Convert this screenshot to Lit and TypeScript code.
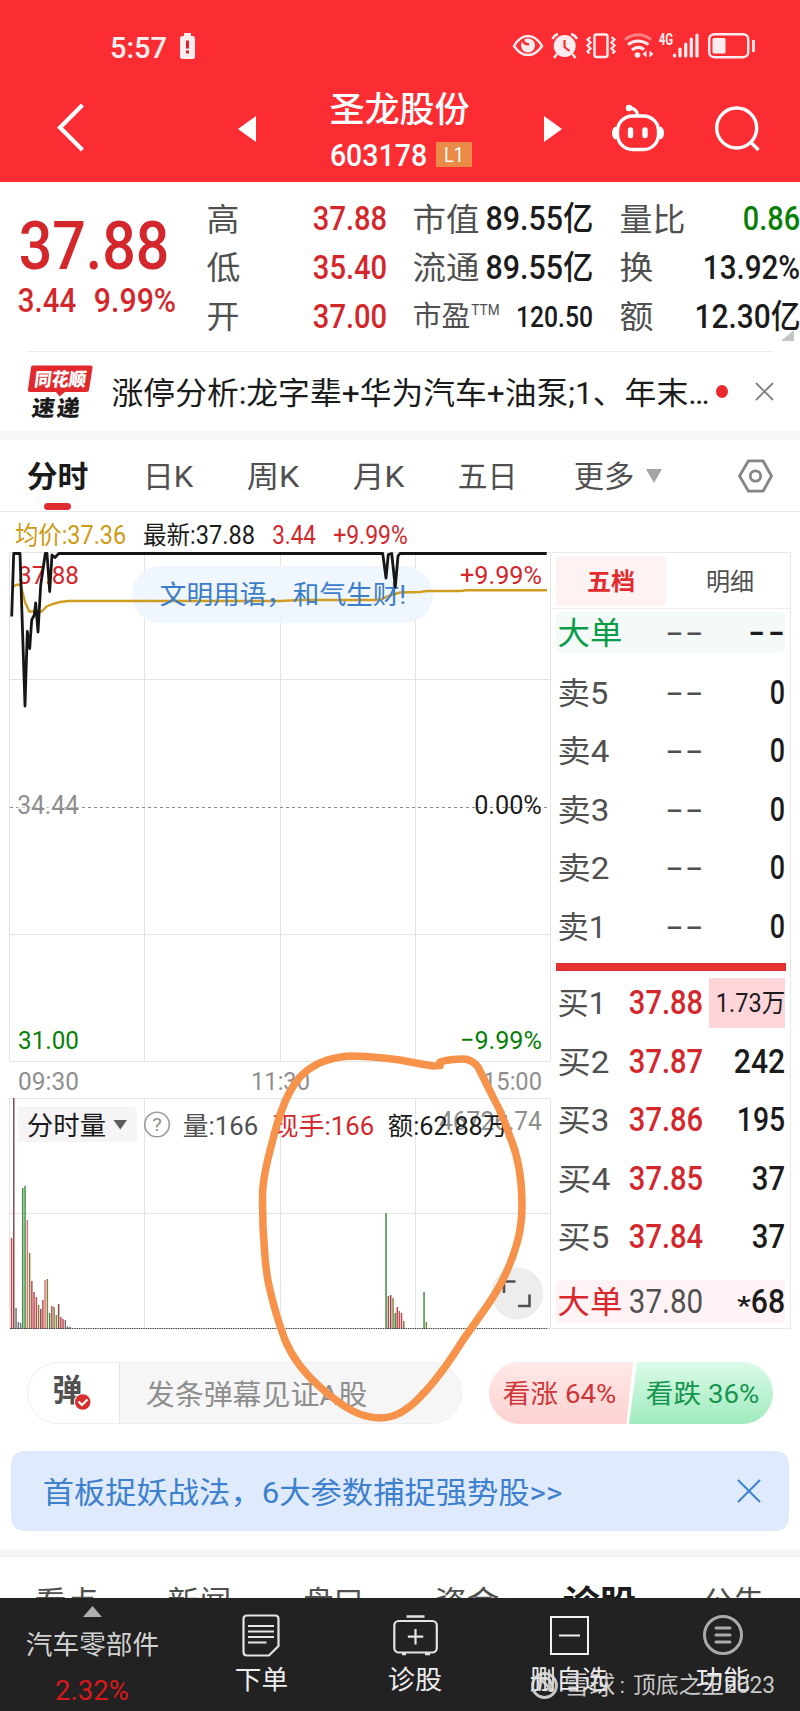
import { LitElement, html, svg, css } from "lit";
import { customElement } from "lit/decorators.js";

/* Side bearing, in em, that a line carries on each end. */
const bearing = (text: string) => (/^[\d+−*.:%-]+$/.test(text) ? 0.035 : 0.045);

/* One line of text whose ink spans exactly `w` pixels; the box is `size` high. */
const fit = (text: string, w: number, size: number, cls = "") => html`
  <svg class="fit ${cls}" width=${w} height=${size}>
    <text x=${-bearing(text) * size} y=${0.86 * size} font-size=${size}
      textLength=${w + 2 * bearing(text) * size} lengthAdjust="spacingAndGlyphs">${text}</text>
  </svg>`;

/* The same inside a drawing: x is the left ink edge, cy the vertical centre. */
const label = (text: string, x: number, cy: number, w: number, size: number, cls = "") => svg`
  <text class=${cls} x=${x - bearing(text) * size} y=${cy + 0.36 * size} font-size=${size}
    textLength=${w + 2 * bearing(text) * size} lengthAdjust="spacingAndGlyphs">${text}</text>`;

const shared = css`
  :host { display: block; font-family: Roboto, "Noto Sans CJK SC", sans-serif; }
  svg { display: block; flex: none; overflow: visible; }
  text { white-space: pre; }
  .fit { fill: currentColor; }
  .m { font-weight: 500; }
  .b { font-weight: 700; }
  .red { color: #d3272c; fill: #d3272c; }
  .green { color: #088008; fill: #088008; }
  .grey { color: #8e8e8e; fill: #8e8e8e; }
  .dim { color: #505050; fill: #505050; }
  .ink { color: #1b1b1b; fill: #1b1b1b; }
`;

@customElement("top-bar")
class TopBar extends LitElement {
  static styles = [shared, css`
    :host { height: 182px; background: #fb2d33; color: #fff; }
    .status { display: flex; height: 92px; padding: 2px 45px 0 111px; box-sizing: border-box; align-items: center; color: #ffecee; }
    .low { margin: 0 0 3px 14px; }
    .sys { margin: 0 0 3px auto; }
    .bar { display: flex; align-items: flex-start; height: 90px; }
    .back { margin: 12px 0 0 57px; }
    .prev { margin: 24px 0 0 154px; }
    .name { margin: 0 0 0 75px; width: 141px; display: flex; flex-direction: column; gap: 12px; }
    .code { display: flex; gap: 10px; align-items: center; }
    .lv { background: #ea8b48; width: 36px; height: 25px; display: flex; align-items: center; justify-content: center; border-radius: 1px; }
    .next { margin: 24px 0 0 72px; }
    .bot { margin: 12px 0 0 50px; }
    .find { margin: 14px 0 0 51px; }
  `];
  render() {
    return html`
      <div class="status">
        ${fit("5:57", 55, 30, "m")}
        <svg class="low" width="15" height="26" viewBox="0 0 15 26">
          <path d="M4 0h7v3h-7z" fill="#ffecee"/><rect y="3" width="15" height="23" rx="2.5" fill="#ffecee"/>
          <path d="M6 7.500h3v8h-3zM6 17.500h3v3h-3z" fill="#e0202a"/>
        </svg>
        <svg class="sys" width="242" height="27" viewBox="513 32 242 27" fill="none" stroke="#ffecee" stroke-width="2.400">
          <path d="M514 46Q520 36 528 36Q536 36 542 46Q536 55 528 55Q520 55 514 46Z"/>
          <circle cx="528" cy="45.500" r="7" fill="#ffecee" stroke="none"/>
          <path d="M523 40q1 5 6 4" stroke="#fb2d33" stroke-width="2.600"/>
          <circle cx="564.700" cy="46" r="11" fill="#ffecee" stroke="none"/>
          <path d="M552.500 39q2-4 5.500-5M571 34q4 1 6 5M557 54l-3 4M572.500 54l3 4"/>
          <path d="M564.500 40v7l5 4" stroke="#fb2d33" stroke-width="2.200"/>
          <rect x="594.500" y="34.500" width="13" height="22.500" rx="2"/>
          <path d="M590.500 37l-3 2.500 3 3-3 3 3 3-3 3 2 2M611.500 37l3 2.500-3 3 3 3-3 3 3 3-2 2" stroke-width="2.200"/>
          <path d="M625 39.500Q638 30 651 39.500" stroke="#fd8087" stroke-width="3"/>
          <path d="M628 44.500Q638 37.500 648.500 44.500" stroke-width="3"/>
          <path d="M632 50Q638 45 644 49.500" stroke-width="3"/>
          <circle cx="637.500" cy="55" r="2.800" fill="#ffecee" stroke="none"/>
          <path d="M646.500 50.500v7l-4-3.500zM649.500 50.500v7l4-3.500z" fill="#ffecee" stroke="none"/>
          <g fill="#ffecee" stroke="none" class="b">${label("4G", 659.5, 39.5, 13, 16)}</g>
          <path d="M674.500 56v-1M680 56v-7M685.700 56v-12M691.300 56v-17M697 56v-21" stroke-width="3.200" stroke-linecap="round"/>
          <rect x="709.200" y="34.200" width="39" height="23" rx="5"/>
          <rect x="712.500" y="38" width="13" height="15.500" rx="1.500" fill="#ffecee" stroke="none"/>
          <path d="M753.500 40v12" stroke-width="2.800"/>
        </svg>
      </div>
      <div class="bar">
        <svg class="back" width="27" height="47" viewBox="0 0 27 47"><path d="M25.500 1L3 23.500 25.500 46" fill="none" stroke="#fff" stroke-width="4.200"/></svg>
        <svg class="prev" width="18" height="26"><path d="M18 0v26L0 13z" fill="#fff"/></svg>
        <div class="name">
          ${fit("圣龙股份", 137, 35, "m")}
          <div class="code">${fit("603178", 95, 31, "m")}<span class="lv">${fit("L1", 18, 21)}</span></div>
        </div>
        <svg class="next" width="18" height="26"><path d="M0 0v26L18 13z" fill="#fff"/></svg>
        <svg class="bot" width="52" height="48" viewBox="612 104 52 48" fill="none" stroke="#fff" stroke-width="3.400">
          <rect x="617.500" y="116" width="41" height="33.500" rx="15"/>
          <path d="M637.500 116c0-5-3-8-8-8" />
          <circle cx="629" cy="108" r="3.200" fill="#fff" stroke="none"/>
          <path d="M616 126.500q-4 1-4 6.500t4 6.500zM660 126.500q4 1 4 6.500t-4 6.500z" fill="#fff" stroke="none"/>
          <path d="M630.500 130v5.500M645 130v5.500" stroke-width="5.400" stroke-linecap="round"/>
        </svg>
        <svg class="find" width="46" height="46" viewBox="715 106 46 46" fill="none" stroke="#fff" stroke-width="3.400">
          <circle cx="736.700" cy="128" r="20"/><path d="M750.500 142l8 8"/>
        </svg>
      </div>`;
  }
}

@customElement("quote-panel")
class QuotePanel extends LitElement {
  static styles = [shared, css`
    :host { height: 169px; }
    .wrap { display: flex; position: relative; }
    .main { width: 208px; padding: 29px 0 0 21px; box-sizing: border-box; }
    .chg { display: flex; gap: 20px; margin: 6px 0 0 -2px; }
    .col { width: 178px; padding-top: 12.300px; }
    .col + .col { margin-left: 28px; }
    .col:last-of-type { width: 178px; margin-left: 29px; }
    .row { height: 48.700px; display: flex; justify-content: space-between; align-items: center; }
    .pe { display: flex; gap: 3px; }
    .more { position: absolute; left: 781px; top: 148px; }
  `];
  render() {
    return html`<div class="wrap">
      <div class="main">
        ${fit("37.88", 146, 67, "m red")}
        <div class="chg">${fit("3.44", 56, 33, "m red")}${fit("9.99%", 80, 33, "m red")}</div>
      </div>
      <div class="col">
        <div class="row">${fit("高", 30, 32, "dim")}${fit("37.88", 72, 33, "m red")}</div>
        <div class="row">${fit("低", 31, 32, "dim")}${fit("35.40", 72, 33, "m red")}</div>
        <div class="row">${fit("开", 30, 32, "dim")}${fit("37.00", 72, 33, "m red")}</div>
      </div>
      <div class="col">
        <div class="row">${fit("市值", 64, 32, "dim")}${fit("89.55亿", 105, 33, "m ink")}</div>
        <div class="row">${fit("流通", 64, 32, "dim")}${fit("89.55亿", 105, 33, "m ink")}</div>
        <div class="row"><span class="pe">${fit("市盈", 55, 28, "dim")}${fit("TTM", 27, 15, "dim")}</span>${fit("120.50", 75, 29, "m ink")}</div>
      </div>
      <div class="col">
        <div class="row">${fit("量比", 63, 32, "dim")}${fit("0.86", 55, 33, "m green")}</div>
        <div class="row">${fit("换", 31, 32, "dim")}${fit("13.92%", 95, 33, "m ink")}</div>
        <div class="row">${fit("额", 31, 32, "dim")}${fit("12.30亿", 103, 33, "m ink")}</div>
      </div>
      <svg class="more" width="13" height="11"><path d="M13 0v11H0z" fill="#c4c4c4"/></svg>
    </div>`;
  }
}

@customElement("news-strip")
class NewsStrip extends LitElement {
  static styles = [shared, css`
    :host { height: 80px; }
    .row { display: flex; align-items: center; height: 80px; margin: 0 27px; border-top: 1px solid #ececec; box-sizing: border-box; }
    .logo { margin-left: 1px; }
    .txt { margin: 1px 0 0 19px; }
    .dot { width: 13px; height: 13px; border-radius: 50%; background: #e9292d; margin: 0 0 0 8px; }
    .x { margin-left: 28px; }
    .white { fill: #fff; }
    .slant text { font-weight: 900; }
  `];
  render() {
    return html`<div class="row">
      <svg class="logo" width="66" height="54" viewBox="28 364 66 54">
        <path d="M33 364.500h57.500q2.500 0 2 2.500l-3.500 22q-.4 2-2.500 2H65l-5.500 4.500L56 391H30q-2.500 0-2-2.500l3-22q.3-2 2-2z" fill="#e12a2e"/>
        <g class="slant" transform="translate(46 0) skewX(-7)">
          ${label("同花顺", 36, 378.5, 50, 18.5, "white")}
          ${label("速", 37, 407, 21, 22, "ink")}${label("递", 62, 407, 21, 22, "ink")}
        </g>
      </svg>
      <span class="txt">${fit("涨停分析:龙字辈+华为汽车+油泵;1、年末…", 595, 31, "ink")}</span>
      <span class="dot"></span>
      <svg class="x" width="17" height="17"><path d="M0 0l17 17M17 0L0 17" stroke="#808080" stroke-width="1.800"/></svg>
    </div>`;
  }
}

@customElement("period-tabs")
class PeriodTabs extends LitElement {
  static styles = [shared, css`
    :host { border-top: 9px solid #f6f6f7; }
    .row { height: 72px; box-sizing: border-box; border-bottom: 1px solid #e9e9e9; display: flex; align-items: center; padding-left: 28px; }
    .tab { margin: 1px 0 0 56px; }
    .on { position: relative; margin: 1px 1px 0 0; }
    .on::after { content: ""; position: absolute; left: 16px; top: 42px; width: 27px; height: 7px; border-radius: 4px; background: #e02c30; }
    .more { margin-left: 59px; }
    .tri { margin: 0 0 0 13px; }
    .set { margin-left: 76px; }
  `];
  render() {
    return html`<div class="row">
      <span class="tab on">${fit("分时", 59, 30, "b ink")}</span>
      <span class="tab">${fit("日K", 48, 30, "dim")}</span>
      <span class="tab">${fit("周K", 50, 30, "dim")}</span>
      <span class="tab">${fit("月K", 49, 30, "dim")}</span>
      <span class="tab">${fit("五日", 57, 30, "dim")}</span>
      <span class="tab more">${fit("更多", 58, 30, "dim")}</span>
      <svg class="tri" width="16" height="14"><path d="M0 0h16L8 14z" fill="#a5a5a5"/></svg>
      <svg class="set" width="35" height="34" viewBox="0 0 35 34" fill="none" stroke="#858585" stroke-width="2.800" stroke-linejoin="round">
        <path d="M10.500 1.800h14.500l8.500 15.200-8.500 15.200H10.500L1.500 17z"/><circle cx="17.500" cy="17" r="5.200"/>
      </svg>
    </div>`;
  }
}

const R = "#c04a50", D = "#8c4a4c", G = "#3f8f44", O = "#86803c", S = "#6d7478";
const BARS: [number, number, string][] = [
  [11.5, 1238, R], [13.7, 1098, D], [16, 1308, S], [18.3, 1322, S], [20.6, 1323, S],
  [22.7, 1188, G], [25, 1186, G], [27.3, 1220, "#d9777a"], [29.6, 1253, O], [31.8, 1281, R],
  [34, 1292, R], [36.3, 1297, R], [38.5, 1305, O], [40.7, 1309, D], [42.8, 1300, R],
  [45, 1280, "#d9777a"], [47.3, 1279, O], [49.6, 1313, G], [51.8, 1306, R], [54, 1307, O],
  [56.3, 1315, O], [58.6, 1304, D], [60.8, 1317, R], [63, 1319, R], [65.3, 1320, S], [67.5, 1326.5, S], [69.8, 1327, S],
  [386, 1213, G], [388.3, 1296, R], [390.6, 1295, D], [393, 1298, O], [395.2, 1313, G],
  [397.2, 1307, R], [399.3, 1311, R], [401.5, 1313, R], [403.8, 1321, O],
  [424, 1292, G], [426.3, 1322, O],
];

@customElement("minute-chart")
class MinuteChart extends LitElement {
  static styles = [shared, css`
    :host { width: 552px; }
    .info { display: flex; align-items: center; height: 40px; padding: 4px 0 0 16px; box-sizing: border-box; }
    .avg { color: #cf9a14; }
    .new, .gap { margin-left: 19px; }
    .tip { fill: #3b7dc8; }
    .chipbg { fill: #f6f4f6; }
  `];
  render() {
    return html`
      <div class="info">
        ${fit("均价:37.36", 109, 25, "avg")}
        <span class="new">${fit("最新:37.88", 110, 25, "ink")}</span>
        <span class="gap">${fit("3.44", 42, 25, "red")}</span>
        <span class="gap">${fit("+9.99%", 73, 25, "red")}</span>
      </div>
      <svg width="552" height="778" viewBox="0 552 552 778">
        <g fill="none" stroke="#e4e4e4" stroke-width="1">
          <path d="M9.500 552.500H550.500V1061.500H9.500zM9.500 679.500H550M9.500 934.500H550M144.500 552V1061M280.500 552V1061M415.500 552V1061"/>
          <path d="M9.500 1098.500H550.500V1328.500H9.500zM9.500 1213.500H550M144.500 1098V1328M280.500 1098V1328M415.500 1098V1328"/>
        </g>
        <path d="M10 807.500H549" stroke="#8c8c8c" stroke-dasharray="3 3"/>
        <rect x="17" y="795" width="63" height="22" fill="#fff" opacity=".5"/>
        <rect x="132" y="566" width="301" height="57" rx="28.500" fill="#eef5fd" opacity=".93"/>
        <path d="M12.500 587L16 585 20.700 584.500 25 602 29.300 611.500H41.700L46.700 606.500 53 604 60 602 68 601H280L300 600H380L388 596 400 592.500 420 592 427 591H461L466 590.300H547" fill="none" stroke="#cf9d22" stroke-width="2.400"/>
        ${label("37.88", 19, 574, 59, 26.5, "red")}
        ${label("+9.99%", 461, 574, 80, 26.5, "red")}
        ${label("34.44", 18, 804.5, 60, 25, "grey")}
        ${label("0.00%", 475, 804.5, 66, 25, "ink")}
        ${label("31.00", 19, 1039.5, 59, 26.5, "green")}
        ${label("−9.99%", 461, 1039.5, 80, 26.5, "green")}
        ${label("文明用语，和气生财!", 161, 595, 244, 26, "tip")}
        <path d="M11.700 616.500L13.700 553.500H20L25 706 27.300 631.500 29.700 648.500 31.700 620 34.300 615 35.700 603 38 632 40.700 585 45.300 553.500H47L49.700 591.500 52 555 55 557.500 58.700 553.500H382.700L386 578 388.300 554.500 391.700 553.500 395.300 587 398 556 400 553.500H546.700" fill="none" stroke="#161616" stroke-width="2.800" stroke-linejoin="round"/>
        ${label("09:30", 19, 1080, 59, 26.5, "grey")}
        ${label("11:30", 252, 1080, 57, 26.5, "grey")}
        ${label("15:00", 484, 1080, 57, 26.5, "grey")}
        ${BARS.map(([x, y, c]) => svg`<rect x=${x - 0.7} y=${y} width="1.500" height=${1329 - y} fill=${c}></rect>`)}
        <path d="M10 1328.500H548" stroke="#3d3d3d" stroke-dasharray="1.300 1"/>
        <rect class="chipbg" x="18" y="1107" width="119" height="35" rx="3"/>
        ${label("分时量", 28, 1125.5, 77, 26, "ink")}
        <path d="M113.500 1120h13.500l-6.700 9.500z" fill="#5c5c5c"/>
        <circle cx="157" cy="1124.500" r="12.300" fill="none" stroke="#9b9b9b" stroke-width="1.600"/>
        ${label("?", 153, 1124.5, 8, 18, "grey")}
        ${label("量:166", 184, 1125.5, 73, 25.5, "dim")}
        ${label("现手:166", 274, 1125.5, 99, 25.5, "red")}
        ${label("46726.74", 440, 1120.5, 101, 25.5, "grey")}
        ${label("额:62.88万", 389, 1125.5, 118, 25.5, "ink")}
        <circle cx="517" cy="1293.500" r="26" fill="#ededed"/>
        <path d="M504 1293v-11.500h11.500M518 1306h11.500v-11.500" fill="none" stroke="#505050" stroke-width="2.600"/>
      </svg>`;
  }
}

@customElement("order-book")
class OrderBook extends LitElement {
  static styles = [shared, css`
    :host { width: 239px; height: 777px; margin-top: 40px; border: 1px solid #e8e8e8; border-left: 0; box-sizing: border-box; }
    .tabs { display: flex; padding: 3px 4px 2px; height: 50px; border-bottom: 1px solid #ececec; }
    .tab { width: 110px; height: 50px; display: flex; align-items: center; justify-content: center; }
    .tab + .tab { margin-left: 9px; }
    .on { background: #fff2f3; border-radius: 3px; color: #e12b2e; }
    .row { display: grid; grid-template-columns: 71px 75px 1fr; align-items: center; height: 58.500px; margin: 0 5px 0 4px; padding: 0 1px 0 3px; }
    .row > :last-child { justify-self: end; }
    .dash { justify-self: end; margin-right: 3px; display: flex; gap: 6px; }
    .sum { height: 41px; border-radius: 5px; }
    .ask { background: #f4faf8; margin-top: 3px; margin-bottom: 10px; color: #0a9c48; }
    .bid { background: #fff3f5; margin-top: 14px; height: 43px; color: #d9272b; }
    .line { height: 8px; background: #e1302f; margin: 7px 4px 3px 4px; }
    .hot { background: #ffd5da; height: 50px; width: 75px; display: flex; align-items: center; justify-content: flex-end; padding-right: 1px; margin-right: -1px; }
    .own { display: flex; align-items: center; gap: 2px; }
    .star { margin-top: 8px; }
    .dashes text { letter-spacing: 2.500px; }
    .dashes { margin-right: -3px; }
  `];
  asks: [string, number][] = [["卖5", 48], ["卖4", 49], ["卖3", 49], ["卖2", 49], ["卖1", 46]];
  bids: [string, number, string, string, number][] = [
    ["买1", 46, "37.88", "1.73万", 67], ["买2", 49, "37.87", "242", 49],
    ["买3", 49, "37.86", "195", 46], ["买4", 50, "37.85", "37", 31], ["买5", 49, "37.84", "37", 31],
  ];
  dash = (cls: string) => html`<span class="dashes">${fit("--", 37, 33, cls)}</span>`;
  render() {
    return html`
      <div class="tabs"><span class="tab on">${fit("五档", 46, 24, "b")}</span><span class="tab">${fit("明细", 46, 24, "dim")}</span></div>
      <div class="row sum ask">${fit("大单", 62, 31)}<span class="dash">${this.dash("dim")}</span>${this.dash("m ink")}</div>
      ${this.asks.map(([n, w]) => html`<div class="row">${fit(n, w, 31, "dim")}<span class="dash">${this.dash("dim")}</span>${fit("0", 13, 33, "m ink")}</div>`)}
      <div class="line"></div>
      ${this.bids.map(([n, w, p, q, qw]) => html`<div class="row">${fit(n, w, 31, "dim")}${fit(p, 72, 33, "m red")}${
        q === "1.73万" ? html`<span class="hot">${fit(q, qw, 26, "ink")}</span>` : fit(q, qw, 33, "m ink")}</div>`)}
      <div class="row sum bid">${fit("大单", 62, 31)}${fit("37.80", 72, 33, "dim")}<span class="own"><span class="star">${fit("*", 12, 26, "m ink")}</span>${fit("68", 32, 33, "m ink")}</span></div>`;
  }
}

@customElement("action-area")
class ActionArea extends LitElement {
  static styles = [shared, css`
    .row { display: flex; padding: 33px 27px 0; height: 62px; }
    .pill { width: 435px; height: 62px; box-sizing: border-box; border: 1px solid #eee; border-radius: 31px; overflow: hidden; display: flex; }
    .toggle { width: 92px; border-right: 1px solid #e6e6e6; box-sizing: border-box; padding: 12px 0 0 25px; }
    .field { flex: 1; background: #f6f6f6; display: flex; align-items: center; padding: 3px 0 0 27px; }
    .vote { display: flex; margin-left: 27px; width: 284px; height: 62px; border-radius: 31px; overflow: hidden; }
    .up, .down { display: flex; align-items: center; box-sizing: border-box; padding-top: 2px; }
    .up { width: 144px; padding-left: 15px; background: linear-gradient(#ffe9e8, #fdd2d0); clip-path: polygon(0 0, 100% 0, 137.500px 100%, 0 100%); color: #cf3538; }
    .down { width: 144px; margin-left: -4px; padding-left: 18px; background: linear-gradient(#dbfbe9, #9feabd); clip-path: polygon(8px 0, 100% 0, 100% 100%, 0 100%); color: #17954f; }
    .ad { margin: 27px 11px 0; height: 80px; border-radius: 13px; background: #dfebfd; display: flex; align-items: center; padding: 0 29px 0 33px; justify-content: space-between; color: #3d80cd; }
    .adt { margin-top: 2px; }
    .band { margin-top: 18px; height: 8px; background: #f5f5f6; }
    .subs { height: 41px; overflow: hidden; display: flex; }
    .sub { flex: 1; display: flex; justify-content: center; padding-top: 29px; }
  `];
  subs: [string, number][] = [["看点", 61], ["新闻", 61], ["盘口", 57], ["资金", 62], ["诊股", 71], ["公告", 59]];
  render() {
    return html`
      <div class="row">
        <div class="pill">
          <div class="toggle"><svg width="40" height="36" viewBox="53 1375 40 36">
            ${label("弹", 54, 1390, 27, 31, "b dim")}
            <circle cx="82.700" cy="1402" r="8.800" fill="#fff"/><circle cx="82.700" cy="1402" r="7.800" fill="#d9302f"/>
            <path d="M78.500 1401.500l3.500 3.500 5.500-5.500" fill="none" stroke="#fff" stroke-width="2.200"/>
          </svg></div>
          <div class="field">${fit("发条弹幕见证A股", 219, 28, "grey")}</div>
        </div>
        <div class="vote">
          <span class="up">${fit("看涨 64%", 111, 26)}</span>
          <span class="down">${fit("看跌 36%", 111, 26)}</span>
        </div>
      </div>
      <div class="ad"><span class="adt">${fit("首板捉妖战法，6大参数捕捉强势股>>", 517, 30)}</span>
        <svg width="22" height="22"><path d="M0 0l22 22M22 0L0 22" stroke="#4285cf" stroke-width="2.200"/></svg>
      </div>
      <div class="band"></div>
      <div class="subs">${this.subs.map(([s, w]) => html`<span class="sub">${fit(s, w, s === "诊股" ? 34 : 31, s === "诊股" ? "b ink" : "dim")}</span>`)}</div>`;
  }
}

@customElement("bottom-nav")
class BottomNav extends LitElement {
  static styles = [shared, css`
    :host { background: #222; height: 113px; color: #ededed; }
    .nav { display: flex; }
    .sector { width: 184px; display: flex; flex-direction: column; align-items: center; padding-top: 8px; color: #d2d2d2; }
    .sname { margin-top: 15px; }
    .spct { margin-top: 18px; color: #d8191c; }
    .item { width: 154px; display: flex; flex-direction: column; align-items: center; padding-top: 15px; }
    .ico { height: 44px; display: flex; align-items: center; }
    .cap { margin-top: 10px; }
    .muted { opacity: .75; }
  `];
  item(icon: unknown, cap: string, w: number) {
    return html`<div class="item"><span class="ico">${icon}</span><span class="cap">${fit(cap, w, 26)}</span></div>`;
  }
  render() {
    return html`<div class="nav">
      <div class="sector">
        <svg width="19" height="11"><path d="M9.500 0L19 11H0z" fill="#b0b0b0"/></svg>
        <span class="sname">${fit("汽车零部件", 131, 26)}</span>
        <span class="spct">${fit("2.32%", 72, 28)}</span>
      </div>
      ${this.item(html`<svg width="38" height="43" viewBox="0 0 38 43" fill="none" stroke="#e4e4e4" stroke-width="2.200">
        <path d="M5 1.500h28q3.500 0 3.500 3.500v27L27 41.500H5Q1.500 41.500 1.500 38V5Q1.500 1.500 5 1.500z"/><path d="M6 12h26M6 17.500h26M6 23h26M6 28.500h18.500" stroke-width="2"/></svg>`, "下单", 51)}
      ${this.item(html`<svg width="45" height="42" viewBox="0 0 45 42" fill="none" stroke="#e4e4e4" stroke-width="2.200">
        <path d="M13.500 2.500h18M9 40h4M32 40h5" stroke-width="2.600"/><rect x="1.300" y="7" width="42.500" height="31.500" rx="4.500"/><path d="M22.500 15v15.500M14.800 22.700h15.500"/></svg>`, "诊股", 52)}
      ${this.item(html`<svg width="39" height="39" viewBox="0 0 39 39" fill="none" stroke="#f2f2f2" stroke-width="2"><rect x="1" y="1" width="37" height="37"/><path d="M9 19.500h21"/></svg>`, "删自选", 76)}
      ${this.item(html`<svg class="muted" width="40" height="40" viewBox="0 0 40 40" fill="none" stroke="#d8d8d8" stroke-width="3"><circle cx="20" cy="20" r="18.500"/><path d="M13 13h14M13 20h14M13 27h14" stroke-linecap="round"/></svg>`, "功能", 52)}
    </div>`;
  }
}

@customElement("app-root")
class AppRoot extends LitElement {
  static styles = [shared, css`
    :host { position: relative; width: 800px; height: 1711px; overflow: hidden; background: #fff; }
    .market { display: flex; height: 817px; }
    .pen { position: absolute; left: 0; top: 0; }
    .mark { position: absolute; left: 531px; top: 1670px; opacity: .9; }
    .wm { fill: #dcdcdc; }
  `];
  render() {
    return html`
      <top-bar></top-bar>
      <quote-panel></quote-panel>
      <news-strip></news-strip>
      <period-tabs></period-tabs>
      <div class="market"><minute-chart></minute-chart><order-book></order-book></div>
      <action-area></action-area>
      <bottom-nav></bottom-nav>
      <svg class="pen" width="800" height="1711" fill="none" stroke="#f6924a" stroke-width="7.500" stroke-linejoin="round" stroke-linecap="round">
        <path d="M440 1065.500L433 1066Q415 1063 400 1060Q370 1056 350 1056Q318 1058 300 1077Q289 1090 283 1107Q277 1122 272 1143Q264 1172 262.700 1190Q262 1222 264.500 1250Q266 1275 270 1290Q276 1316 285 1340Q296 1366 320 1387Q348 1412 366 1416Q384 1421 400 1413Q412 1406 420 1397Q440 1377 463 1340L487 1306Q500 1287 505 1275Q512 1261 517 1243Q522 1226 522 1205Q522 1165 510 1137Q503 1115 493 1097L478 1067Q472 1059 463 1059Q450 1059 440 1062"/>
      </svg>
      <svg class="mark" width="250" height="30" viewBox="531 1670 250 30">
        <g fill="none" stroke="#dcdcdc" stroke-width="2.800"><circle cx="544.500" cy="1685.500" r="12"/><path d="M540 1690q-4-9 3-11t8 4q1 6-6 7M538 1677l14 13"/></g>
        ${label("雪球", 565, 1685, 49, 25, "wm")}
        ${label(":", 620.5, 1685.5, 3.5, 22, "wm")}
        ${label("顶底之王2023", 634, 1685, 140, 23, "wm")}
      </svg>`;
  }
}
